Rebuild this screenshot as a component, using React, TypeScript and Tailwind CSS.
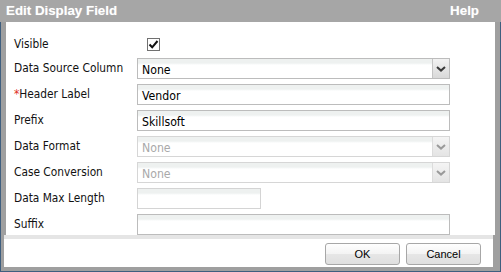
import React from "react";

const labelFont = { fontFamily: '"DejaVu Sans Condensed", "Noto Sans", sans-serif' };

function Chevron({ disabled }: { disabled?: boolean }) {
  return (
    <svg width="10" height="6" viewBox="0 0 10 6">
      <path d="M1 1 L5 4.6 L9 1" fill="none" stroke={disabled ? "#9a9a9a" : "#3a3a3a"} strokeWidth="2" />
    </svg>
  );
}

function TextBox({ value, width = "w-[313px]", disabled }: { value?: string; width?: string; disabled?: boolean }) {
  return (
    <div
      className={`${width} h-[21px] border ${disabled ? "border-[#d4d4d4]" : "border-[#bcbcbc]"} bg-[linear-gradient(to_bottom,#eef1f0_0px,#eef1f0_4px,#ffffff_6px)] flex items-center pl-[4px] pt-[3px] text-[12.2px] text-black`}
      style={labelFont}
    >
      {value}
    </div>
  );
}

function SelectBox({ value, disabled }: { value: string; disabled?: boolean }) {
  return (
    <div
      className={`w-[313px] h-[21px] border ${disabled ? "border-[#d6d6d6]" : "border-[#bcbcbc]"} bg-[linear-gradient(to_bottom,#eef1f0_0px,#eef1f0_4px,#ffffff_6px)] flex items-stretch`}
    >
      <div
        className={`flex-1 flex items-center pl-[4px] pt-[3px] text-[12.2px] ${disabled ? "text-[#a9a9a9]" : "text-black"}`}
        style={labelFont}
      >
        {value}
      </div>
      <div
        className={`w-[17px] border-l ${disabled ? "border-[#dcdcdc] bg-[linear-gradient(to_bottom,#f4f4f4,#e4e4e4)]" : "border-[#c4c4c4] bg-[linear-gradient(to_bottom,#f2f2f2,#d9d9d9)]"} flex items-center justify-center`}
      >
        <Chevron disabled={disabled} />
      </div>
    </div>
  );
}

function Row({ label, children, required }: { label: string; children: React.ReactNode; required?: boolean }) {
  return (
    <div className="flex items-center h-[21px]">
      <div className="w-[123px] text-[11.8px] text-[#111]" style={labelFont}>
        {required && <span className="text-[#e0301e]">*</span>}
        {label}
      </div>
      {children}
    </div>
  );
}

function Button({ children }: { children: React.ReactNode }) {
  return (
    <div
      className="w-[75px] h-[22px] rounded-[3px] border border-[#a7a7a7] bg-[linear-gradient(to_bottom,#fefefe_0%,#f3f3f3_50%,#e6e6e6_52%,#dfdfdf_100%)] flex items-center justify-center text-[11px] text-black"
      style={{ fontFamily: '"Liberation Sans", Arial, sans-serif' }}
    >
      {children}
    </div>
  );
}

export default function App() {
  return (
    <div className="w-[501px] h-[272px] flex flex-col bg-[#9f9f9f] overflow-hidden">
      <div
        className="h-[22px] shrink-0 bg-[#a6a6a6] flex items-center justify-between pl-[6px] pr-[22px] text-white font-bold text-[13.33px] [text-shadow:0_0_1px_rgba(255,255,255,0.4)]"
        style={{ fontFamily: '"Liberation Sans", Arial, sans-serif' }}
      >
        <span>Edit Display Field</span>
        <span>Help</span>
      </div>
      <div className="flex-1 flex flex-col border-l border-r border-b border-[#3f5e7e] pl-[3px] pr-[7px] pb-[4px] bg-[#9f9f9f]">
        <div className="h-[213px] ml-[2px] mr-[-2px] bg-white pl-[8px] pt-[16px] flex flex-col gap-[5px]">
          <div className="flex items-start h-[15px]">
            <div className="w-[123px] text-[11.8px] leading-[13px] text-[#111]" style={labelFont}>
              Visible
            </div>
            <div className="ml-[10px] w-[13px] h-[13px] border border-[#707070] bg-white flex items-center justify-center">
              <svg width="11" height="11" viewBox="0 0 11 11">
                <path d="M1.5 5.5 L4.2 8.3 L9.5 2" fill="none" stroke="#111" strokeWidth="2" />
              </svg>
            </div>
          </div>
          <Row label="Data Source Column">
            <SelectBox value="None" />
          </Row>
          <Row label="Header Label" required>
            <TextBox value="Vendor" />
          </Row>
          <Row label="Prefix">
            <TextBox value="Skillsoft" />
          </Row>
          <Row label="Data Format">
            <SelectBox value="None" disabled />
          </Row>
          <Row label="Case Conversion">
            <SelectBox value="None" disabled />
          </Row>
          <Row label="Data Max Length">
            <TextBox width="w-[124px]" disabled />
          </Row>
          <Row label="Suffix">
            <TextBox />
          </Row>
        </div>
        <div className="h-[4px] bg-[#e5e5e5]" />
        <div className="flex-1 bg-white flex justify-end items-start pt-[4px] pr-[12px] gap-[6px]">
          <Button>OK</Button>
          <Button>Cancel</Button>
        </div>
      </div>
    </div>
  );
}
